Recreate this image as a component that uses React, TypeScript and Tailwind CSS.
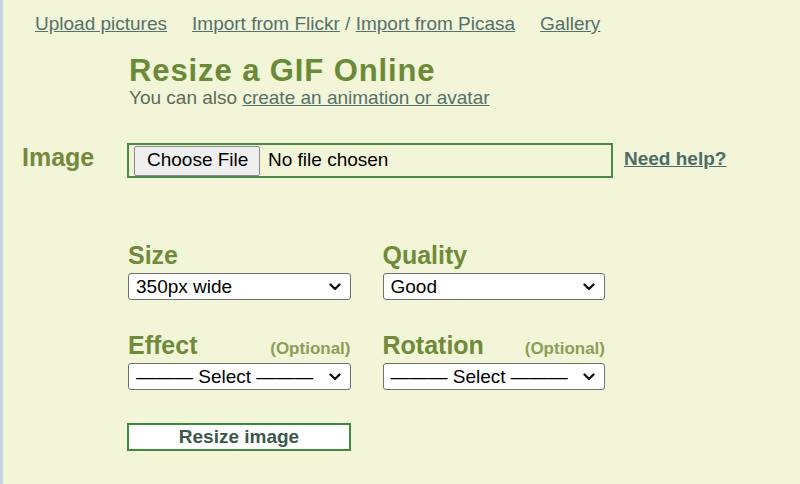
import { ReactNode } from "react"

const font = { fontFamily: '"Liberation Sans", Arial, sans-serif' }

function Chevron() {
  return (
    <svg width="12" height="8" viewBox="0 0 12 8" className="shrink-0">
      <path d="M1.5 1.5 L6 6 L10.5 1.5" fill="none" stroke="#111" strokeWidth="2.3" strokeLinecap="round" strokeLinejoin="round" />
    </svg>
  )
}

function FakeSelect({ children }: { children: ReactNode }) {
  return (
    <div className="flex h-[27px] w-full items-center justify-between rounded-[3px] border border-[#6f6f6f] bg-white pl-[7px] pr-[9px] text-[19px] leading-none text-black">
      <span>{children}</span>
      <Chevron />
    </div>
  )
}

function Field({ label, optional, children }: { label: string; optional?: boolean; children: ReactNode }) {
  return (
    <div className="flex flex-col">
      <div className="flex h-[28px] items-baseline justify-between">
        <span className="text-[25px] font-bold leading-[28px] text-[#6f8a3a]">{label}</span>
        {optional && <span className="text-[17px] font-bold leading-[20px] text-[#8c9e58]">(Optional)</span>}
      </div>
      <div className="mt-[4px]">{children}</div>
    </div>
  )
}

export default function App() {
  return (
    <div className="flex h-[484px] w-full overflow-hidden bg-[#f2f5d8]" style={font}>
      <div className="w-[3px] shrink-0 bg-[#c6d5de]" />
      <div className="w-[1px] shrink-0 bg-[#eaf0e6]" />
      <div className="flex flex-1 flex-col">
        {/* top links */}
        <nav className="mt-[13px] flex gap-[25px] pl-[31px] text-[19px] leading-[22px] text-[#56706b]">
          <a className="underline">Upload pictures</a>
          <span>
            <a className="underline">Import from Flickr</a> / <a className="underline">Import from Picasa</a>
          </span>
          <a className="underline">Gallery</a>
        </nav>

        <div className="ml-[125px] mt-[20px] flex flex-col">
          <h1 className="text-[31px] font-bold leading-[32px] tracking-[0.9px] text-[#6b8a37]">Resize a GIF Online</h1>
          <p className="text-[19px] leading-[22px] text-[#5d6a5c]">
            You can also <a className="text-[#56706b] underline">create an animation or avatar</a>
          </p>
        </div>

        {/* image upload row */}
        <div className="mt-[34px] flex items-start pl-[18px]">
          <span className="w-[105px] text-[25px] font-bold leading-[28px] text-[#74893e]">Image</span>
          <div className="flex h-[35px] w-[486px] items-center border-2 border-[#4b8b45]">
            <div className="ml-[5px] flex h-[30px] w-[126px] items-center rounded-[2px] border border-[#8a8a8a] bg-[#efefef] pl-[12px] text-[19px] text-black">
              Choose File
            </div>
            <span className="ml-[8px] text-[19px] text-black">No file chosen</span>
          </div>
          <a className="ml-[11px] mt-[5px] text-[19px] font-bold leading-[22px] text-[#4f6b68] underline">Need help?</a>
        </div>

        {/* options */}
        <div className="ml-[124px] mt-[63px] grid w-[477px] grid-cols-2 gap-x-[32px] gap-y-[31px]">
          <Field label="Size">
            <FakeSelect>350px wide</FakeSelect>
          </Field>
          <Field label="Quality">
            <FakeSelect>Good</FakeSelect>
          </Field>
          <Field label="Effect" optional>
            <FakeSelect>——— Select ———</FakeSelect>
          </Field>
          <Field label="Rotation" optional>
            <FakeSelect>——— Select ———</FakeSelect>
          </Field>
        </div>

        <div className="ml-[123px] mt-[33px]">
          <button className="flex h-[28px] w-[224px] items-center justify-center border-2 border-[#3f8a3f] bg-white text-[19px] font-bold text-[#3d574a]">
            Resize image
          </button>
        </div>
      </div>
    </div>
  )
}
